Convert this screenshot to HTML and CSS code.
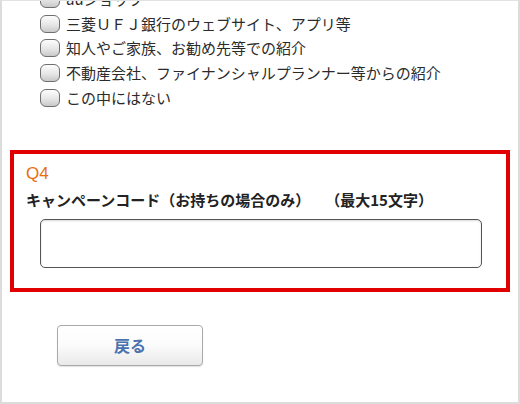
FILE: index.html
```html
<!DOCTYPE html>
<html lang="ja">
<head>
<meta charset="utf-8">
<link rel="stylesheet" href="styles.css">
</head>
<body>
<div class="page">
  <ul class="choices">
    <li class="choice"><span class="box"></span><span>auショップ</span></li>
    <li class="choice"><span class="box"></span><span>三菱ＵＦＪ銀行のウェブサイト、アプリ等</span></li>
    <li class="choice"><span class="box"></span><span>知人やご家族、お勧め先等での紹介</span></li>
    <li class="choice"><span class="box"></span><span>不動産会社、ファイナンシャルプランナー等からの紹介</span></li>
    <li class="choice"><span class="box"></span><span>この中にはない</span></li>
  </ul>
  <section class="question">
    <div class="qnum">Q4</div>
    <div class="qlabel">キャンペーンコード（お持ちの場合のみ）　（最大15文字）</div>
    <input class="code" type="text">
  </section>
  <div class="actions">
    <button class="back" type="button">戻る</button>
  </div>
</div>
</body>
</html>
```
FILE: styles.css
```css
html, body {
  margin: 0;
  padding: 0;
  background: #fff;
}
body {
  font-family: "Noto Sans CJK JP", "Noto Sans", sans-serif;
  color: #2b2b2b;
  text-spacing-trim: space-all;
}
.page {
  box-sizing: border-box;
  width: 520px;
  height: 404px;
  border-top: 1px solid #e2e2e2;
  border-left: 2px solid #dcdcdc;
  border-right: 2px solid #dcdcdc;
  border-bottom: 2px solid #dcdcdc;
  overflow: hidden;
}
.choices {
  list-style: none;
  margin: -14px 0 0 0;
  padding: 0 0 0 38px;
}
.choice {
  display: flex;
  align-items: center;
  height: 24.6px;
  font-size: 15px;
  line-height: 20px;
  gap: 6px;
}
.box {
  box-sizing: border-box;
  width: 20px;
  height: 18px;
  border: 1px solid #6f6f6f;
  border-radius: 6px;
  background: linear-gradient(#fdfdfd 0%, #e6e6e6 55%, #c9c9c9 100%);
  flex: none;
}
.question {
  box-sizing: border-box;
  width: 500px;
  margin: 40px 0 0 8px;
  border: 4px solid #e00000;
  padding: 10px 0 20px 12px;
}
.qnum {
  color: #e8700a;
  font-size: 17px;
  line-height: 20px;
  font-family: "Liberation Sans", "Noto Sans CJK JP", sans-serif;
}
.qlabel {
  margin-top: 6px;
  font-size: 15px;
  line-height: 20px;
  font-weight: bold;
  color: #222;
  text-spacing-trim: space-all;
}
.code {
  display: block;
  box-sizing: border-box;
  width: 442px;
  height: 49px;
  margin: 9px 0 0 14px;
  border: 1px solid #555;
  border-radius: 5px;
  background: #fff;
  box-shadow: inset 0 1px 2px rgba(0,0,0,0.15);
  padding: 0 10px;
  font-size: 15px;
  outline: none;
}
.actions {
  padding: 33px 0 0 55px;
}
.back {
  box-sizing: border-box;
  width: 146px;
  height: 41px;
  border: 1px solid #a9a9a9;
  border-radius: 4px;
  background: linear-gradient(#ffffff 0%, #fbfbfb 50%, #e9e9e9 100%);
  box-shadow: 0 1px 1px rgba(0,0,0,0.12);
  color: #4a72ad;
  font-family: "Noto Sans CJK JP", sans-serif;
  font-size: 16px;
  font-weight: bold;
  padding: 0;
  cursor: pointer;
}
```
